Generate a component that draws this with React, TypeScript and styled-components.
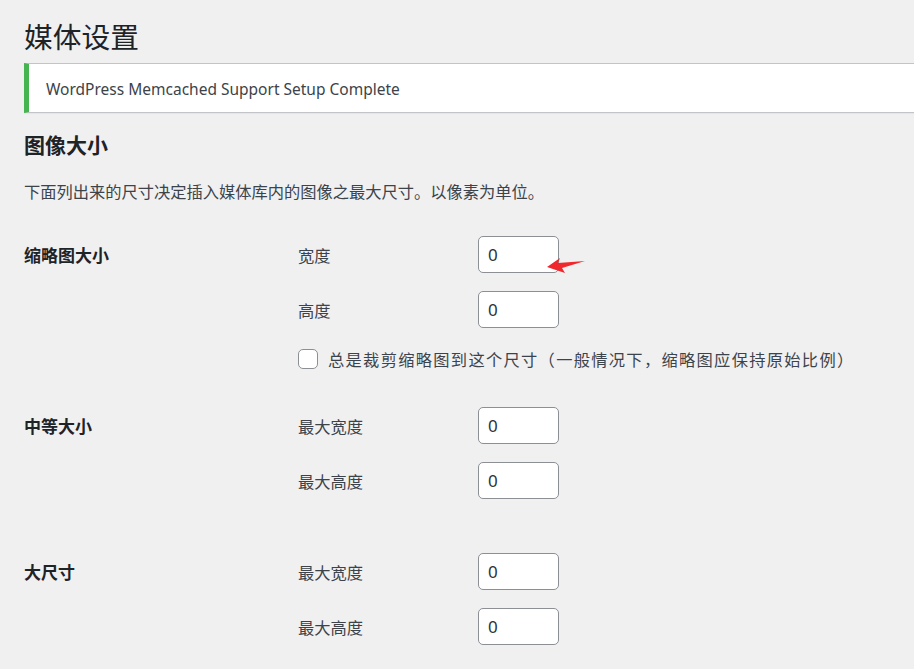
import styled, { createGlobalStyle } from 'styled-components';

const GlobalStyle = createGlobalStyle`
  html, body {
    margin: 0;
    padding: 0;
    background: #f0f0f1;
  }
  body {
    font-family: "Noto Sans", "Noto Sans CJK SC", sans-serif;
    color: #3c434a;
    font-size: 16.25px;
  }
`;

const Page = styled.div`
  padding: 17px 0 30px 24px;
  min-height: 669px;
  box-sizing: border-box;
`;

const Title = styled.h1`
  margin: 0;
  font-family: "Noto Sans CJK SC", sans-serif;
  font-size: 28.75px;
  font-weight: 400;
  line-height: 37px;
  color: #1d2327;
`;

const Notice = styled.div`
  margin-top: 9px;
  background: #fff;
  border: 1px solid #c3c4c7;
  border-left: 5px solid #46b450;
  border-right: none;
  padding: 15px 17px 13px;
  box-shadow: 0 1px 1px rgba(0, 0, 0, 0.04);
`;

const NoticeText = styled.p`
  margin: 0;
  font-family: "Noto Sans", sans-serif;
  font-size: 15.5px;
  line-height: 20px;
  color: #3c434a;
`;

const SectionTitle = styled.h2`
  margin: 18px 0 0;
  font-family: "Noto Sans CJK SC", sans-serif;
  font-size: 21px;
  font-weight: 700;
  line-height: 27px;
  color: #1d2327;
`;

const Description = styled.p`
  margin: 22px 0 0;
  font-family: "Noto Sans CJK SC", sans-serif;
  font-size: 16.25px;
  line-height: 22px;
`;

const SizeGroup = styled.div<{ gapTop: number }>`
  display: grid;
  grid-template-columns: 262px 1fr;
  margin-top: ${p => p.gapTop}px;
`;

const GroupLabel = styled.div`
  font-family: "Noto Sans CJK SC", sans-serif;
  font-size: 17px;
  font-weight: 700;
  line-height: 37px;
  color: #1d2327;
`;

const Fields = styled.div`
  display: flex;
  flex-direction: column;
  gap: 18px;
  padding-left: 12px;
`;

const FieldRow = styled.div`
  display: grid;
  grid-template-columns: 180px 81px;
  align-items: center;
  position: relative;
`;

const FieldLabel = styled.label`
  font-family: "Noto Sans CJK SC", sans-serif;
  font-size: 16.25px;
  color: #3c434a;
`;

const NumberBox = styled.div`
  height: 37px;
  box-sizing: border-box;
  background: #fff;
  border: 1px solid #8c8f94;
  border-radius: 5px;
  padding: 0 9px;
  display: flex;
  align-items: center;
  font-family: "Noto Sans", sans-serif;
  font-size: 17px;
  color: #2c3338;
`;

const CheckRow = styled.label`
  display: flex;
  align-items: center;
  gap: 10px;
  margin-top: 1px;
`;

const CheckBox = styled.span`
  width: 20px;
  height: 20px;
  box-sizing: border-box;
  background: #fff;
  border: 1px solid #8c8f94;
  border-radius: 5px;
  flex: none;
`;

const CheckText = styled.span`
  font-family: "Noto Sans CJK SC", sans-serif;
  font-size: 16.25px;
  letter-spacing: 1.3px;
  line-height: 24px;
  color: #3c434a;
`;

const Arrow = styled.svg`
  position: absolute;
  left: 249px;
  top: 21px;
`;

type Field = { label: string; value: string; arrow?: boolean };

type Group = { title: string; gapTop: number; fields: Field[]; crop?: boolean };

const groups: Group[] = [
  {
    title: '缩略图大小',
    gapTop: 34,
    fields: [
      { label: '宽度', value: '0', arrow: true },
      { label: '高度', value: '0' },
    ],
    crop: true,
  },
  {
    title: '中等大小',
    gapTop: 36,
    fields: [
      { label: '最大宽度', value: '0' },
      { label: '最大高度', value: '0' },
    ],
  },
  {
    title: '大尺寸',
    gapTop: 54,
    fields: [
      { label: '最大宽度', value: '0' },
      { label: '最大高度', value: '0' },
    ],
  },
];

export default function App() {
  return (
    <Page>
      <GlobalStyle />
      <Title>媒体设置</Title>
      <Notice>
        <NoticeText>WordPress Memcached Support Setup Complete</NoticeText>
      </Notice>
      <SectionTitle>图像大小</SectionTitle>
      <Description>下面列出来的尺寸决定插入媒体库内的图像之最大尺寸。以像素为单位。</Description>

      {groups.map(g => (
        <SizeGroup key={g.title} gapTop={g.gapTop}>
          <GroupLabel>{g.title}</GroupLabel>
          <Fields>
            {g.fields.map(f => (
              <FieldRow key={f.label}>
                <FieldLabel>{f.label}</FieldLabel>
                <NumberBox>{f.value}</NumberBox>
                {f.arrow && (
                  <Arrow width="40" height="18" viewBox="0 0 40 18">
                    <polygon points="0,10 13,1 11,6 38,4 15,11 18,16" fill="#f0282d" />
                  </Arrow>
                )}
              </FieldRow>
            ))}
            {g.crop && (
              <CheckRow>
                <CheckBox />
                <CheckText>总是裁剪缩略图到这个尺寸（一般情况下，缩略图应保持原始比例）</CheckText>
              </CheckRow>
            )}
          </Fields>
        </SizeGroup>
      ))}
    </Page>
  );
}
